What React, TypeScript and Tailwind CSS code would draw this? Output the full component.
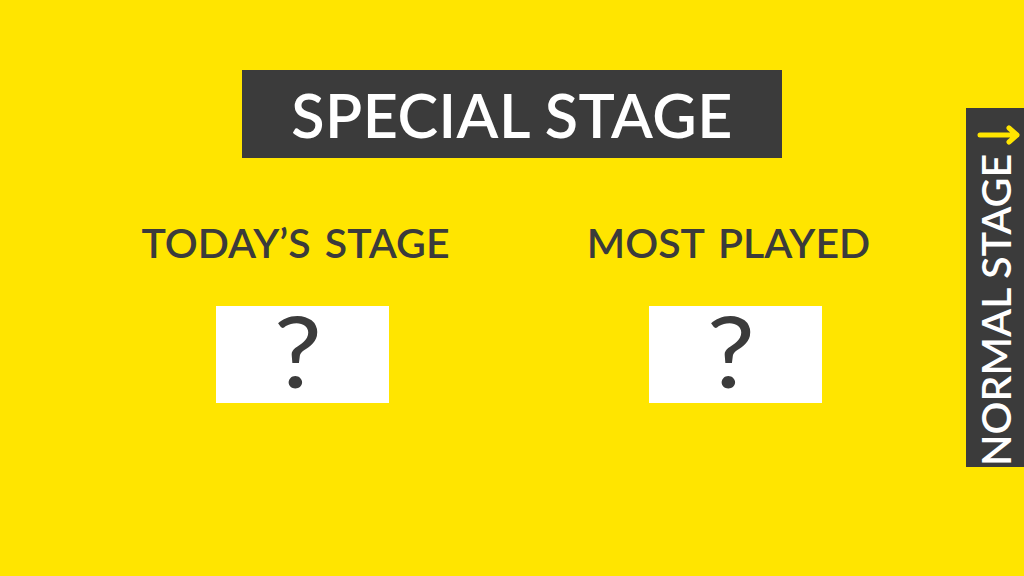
import React from "react";

const DARK = "text-[#3b3b3b]";

function Mystery() {
  return (
    <div className="w-[173px] h-[97px] bg-white flex items-center justify-center ml-[14px]">
      <span className={`${DARK} text-[98px] font-normal leading-none -mt-[10px] -ml-[10px] scale-x-[1.1]`}>?</span>
    </div>
  );
}

function StageColumn({ label }: { label: string }) {
  return (
    <div className="w-[320px] flex flex-col items-center">
      <h2 className={`${DARK} text-[41px] font-semibold leading-none whitespace-nowrap [word-spacing:4px]`}>{label}</h2>
      <div className="mt-[43px]">
        <Mystery />
      </div>
    </div>
  );
}

export default function App() {
  return (
    <div
      className="w-[1024px] h-[576px] bg-[#ffe500] flex overflow-hidden"
      style={{ fontFamily: "Lato, 'Noto Sans', sans-serif" }}
    >
      <div className="w-[58px] shrink-0" />
      <main className="flex-1 flex flex-col items-center pt-[70px]">
        <div className="w-[540px] h-[88px] bg-[#3b3b3b] flex items-center justify-center">
          <h1 className="text-white text-[61px] font-semibold leading-none tracking-[0.5px]">SPECIAL STAGE</h1>
        </div>
        <div className="flex gap-[113px] mt-[64px]">
          <StageColumn label={"TODAY\u2019S STAGE"} />
          <StageColumn label="MOST PLAYED" />
        </div>
      </main>
      <aside className="w-[58px] shrink-0 self-start mt-[108px] h-[359px] bg-[#3b3b3b] flex flex-col items-center pt-[17px]">
        <svg width="46" height="20" viewBox="0 0 46 20" fill="none" className="shrink-0 ml-[8px]">
          <path d="M4 10H41M33 3l8 7-8 7" stroke="#ffe500" strokeWidth="5" strokeLinecap="round" strokeLinejoin="round" />
        </svg>
        <span className="mt-[9px] text-white text-[41px] font-semibold leading-none [writing-mode:vertical-rl] rotate-180 whitespace-nowrap">
          NORMAL STAGE
        </span>
      </aside>
    </div>
  );
}
